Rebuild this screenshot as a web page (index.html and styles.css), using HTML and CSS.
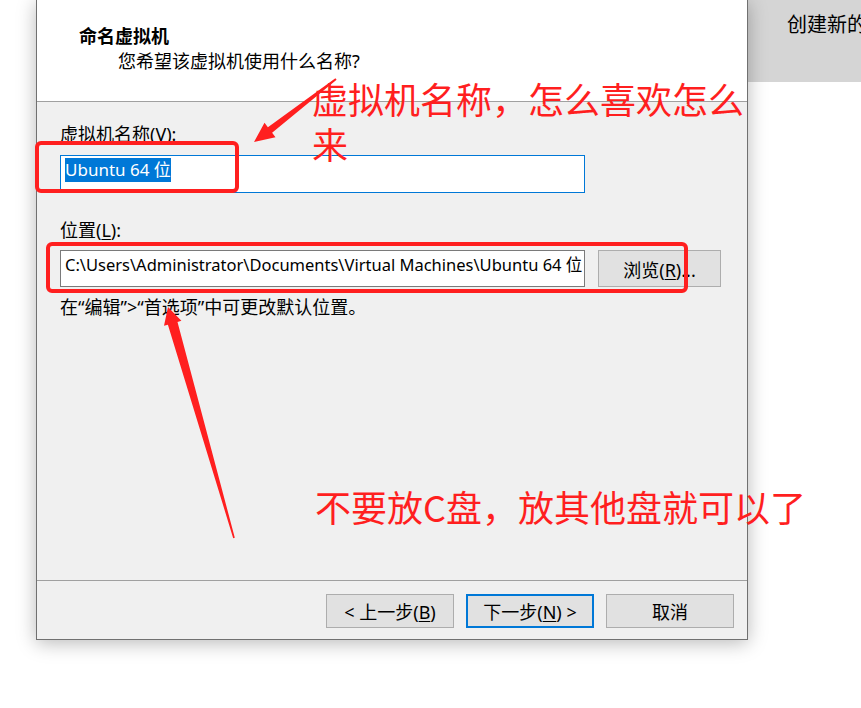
FILE: index.html
```html
<!DOCTYPE html>
<html lang="zh-CN">

<head>
    <meta charset="UTF-8">
    <title>新建虚拟机向导 - 命名虚拟机</title>
    <link rel="stylesheet" href="styles.css">
</head>

<body>
    <div class="bgwin">
        <div class="bgwin-bar">创建新的虚拟机向导</div>
    </div>

    <div class="dialog">
        <div class="dlg-head">
            <div class="dlg-title">命名虚拟机</div>
            <div class="dlg-sub">您希望该虚拟机使用什么名称?</div>
        </div>

        <div class="dlg-body">
            <div class="field">
                <div class="field-label">虚拟机名称(<u>V</u>):</div>
                <div class="edit edit-focus"><span class="sel">Ubuntu 64 位</span></div>
            </div>
            <div class="field field-loc">
                <div class="field-label">位置(<u>L</u>):</div>
                <div class="loc-row">
                    <div class="edit edit-path">C:\Users\Administrator\Documents\Virtual Machines\Ubuntu 64 位</div>
                    <button class="btn btn-browse">浏览(<u>R</u>)...</button>
                </div>
            </div>
            <p class="hint">在“编辑”&gt;“首选项”中可更改默认位置。</p>
        </div>

        <div class="dlg-foot">
            <button class="btn">&lt; 上一步(<u>B</u>)</button>
            <button class="btn btn-default">下一步(<u>N</u>) &gt;</button>
            <button class="btn">取消</button>
        </div>
    </div>

    <!-- red annotations drawn over the screenshot -->
    <svg class="marks" width="861" height="708" viewBox="0 0 861 708">
        <rect x="37" y="143" width="200" height="48" rx="4" class="mark-box" />
        <rect x="48" y="244" width="638" height="47" rx="4" class="mark-box" />
        <polygon class="mark-arrow"
            points="254,142 264.5,122.8 267.9,127.2 335.4,78.2 336.6,79.8 272.1,132.8 275.5,137.2" />
        <polygon class="mark-arrow"
            points="168,307 181.4,320.8 177.5,321.9 234.8,537.8 233.2,538.2 167.9,324.7 164,325.8" />
    </svg>

    <div class="note note-name">虚拟机名称，怎么喜欢怎么<br>来</div>
    <div class="note note-disk">不要放C盘，放其他盘就可以了</div>
</body>

</html>
```

FILE: styles.css
```css
* {
    box-sizing: border-box;
}

body {
    margin: 0;
    width: 861px;
    height: 708px;
    overflow: hidden;
    position: relative;
    background-color: #fff;
    font-family: "Noto Sans", "Noto Sans CJK SC", sans-serif;
    color: #000;
}

u {
    text-decoration-thickness: 1px;
    text-underline-offset: 2px;
}

/* wizard window behind the dialog */
.bgwin {
    position: absolute;
    left: 748px;
    top: 0;
    width: 400px;
    height: 708px;
    background-color: #fff;
}

.bgwin-bar {
    height: 82px;
    background-color: #d5d5d5;
    padding: 9px 0 0 39px;
    font-family: "Noto Sans CJK SC", sans-serif;
    font-size: 20px;
    line-height: 30px;
    white-space: nowrap;
}

/* dialog */
.dialog {
    position: absolute;
    left: 36px;
    top: 0;
    width: 712px;
    height: 640px;
    border: 1px solid #707070;
    border-top: 0;
    background-color: #f0f0f0;
    display: flex;
    flex-direction: column;
    box-shadow: 0 3px 18px rgba(0, 0, 0, 0.28);
}

.dlg-head {
    height: 102px;
    background-color: #fff;
    border-bottom: 1px solid #a0a0a0;
    padding: 26px 0 0 42px;
}

.dlg-title {
    font-size: 18px;
    line-height: 20px;
    font-weight: bold;
}

.dlg-sub {
    margin: 5px 0 0 39px;
    font-size: 18px;
    line-height: 20px;
}

.dlg-body {
    flex: 1;
    padding: 22px 0 0 23px;
}

.field-label {
    font-size: 18px;
    line-height: 20px;
    margin-bottom: 11px;
}

.field-loc {
    margin-top: 27px;
}

.field-loc .field-label {
    margin-bottom: 10px;
}

.edit {
    width: 525px;
    height: 38px;
    padding: 2px 4px 0;
    background-color: #fff;
    border: 1px solid #7a7a7a;
    font-size: 17px;
    line-height: 24px;
    white-space: nowrap;
    overflow: hidden;
}

.edit-focus {
    border-color: #0078d7;
}

.sel {
    display: inline-block;
    background-color: #0078d7;
    color: #fff;
}

.loc-row {
    display: flex;
    gap: 13px;
}

.edit-path {
    height: 37px;
    font-size: 16.5px;
}

.hint {
    margin: 10px 0 0;
    font-size: 18px;
    line-height: 20px;
}

.dlg-foot {
    height: 59px;
    border-top: 1px solid #a0a0a0;
    padding: 13px 13px 0 0;
    display: flex;
    justify-content: flex-end;
    gap: 12px;
}

.btn {
    width: 128px;
    height: 34px;
    padding: 0;
    background-color: #e1e1e1;
    border: 1px solid #adadad;
    font-family: inherit;
    font-size: 18px;
    color: #000;
}

.btn-default {
    border: 2px solid #0078d7;
}

.btn-browse {
    width: 123px;
    height: 37px;
}

/* annotations */
.marks {
    position: absolute;
    left: 0;
    top: 0;
    pointer-events: none;
}

.mark-box {
    fill: none;
    stroke: #ff1f1f;
    stroke-width: 4;
}

.mark-arrow {
    fill: #ff1f1f;
}

.note {
    position: absolute;
    color: #ff1f1f;
    font-family: "Noto Sans CJK SC", sans-serif;
    font-size: 36px;
    line-height: 45px;
    white-space: nowrap;
}

.note-name {
    left: 312px;
    top: 76px;
}

.note-disk {
    left: 315px;
    top: 484px;
}
```
